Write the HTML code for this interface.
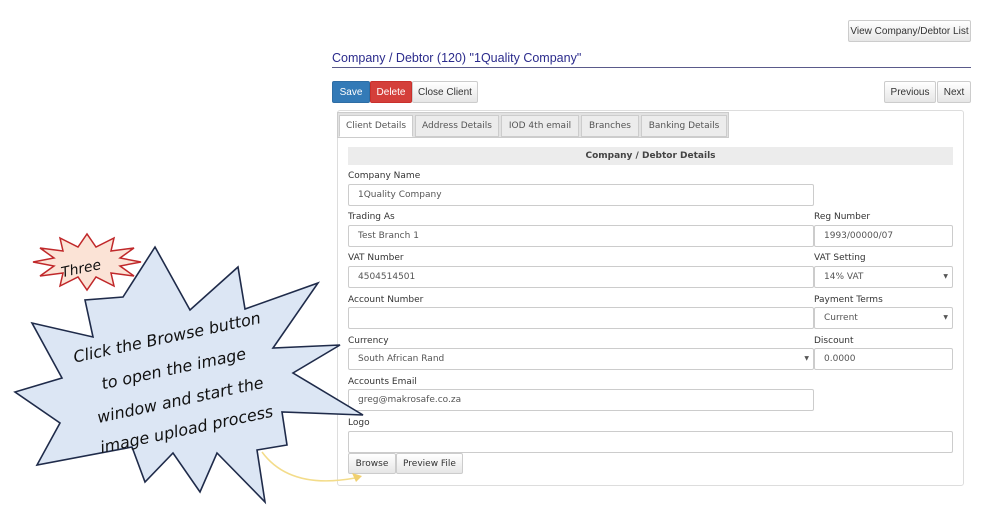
<!DOCTYPE html>
<html><head><meta charset="utf-8"><style>
*{box-sizing:border-box;margin:0;padding:0}
body{width:984px;height:525px;background:#fff;position:relative;overflow:hidden;font-family:"DejaVu Sans",Verdana,sans-serif;font-size:9px;color:#333}
.a{position:absolute}
.btn{position:absolute;border:1px solid #ccc;border-radius:2px;background:linear-gradient(#fff,#e6e6e6);font-family:"Liberation Sans",Arial,sans-serif;font-size:10px;color:#333;display:flex;align-items:center;justify-content:center}
.lbl{position:absolute;font-size:9px;color:#333}
.inp{position:absolute;height:22px;border:1px solid #ccc;border-radius:2px;background:#fff;font-size:9px;color:#555;padding-left:9px;line-height:20px}
.tab{position:absolute;top:115px;height:22px;border:1px solid #ccc;background:#ececec;font-size:9px;color:#555;display:flex;align-items:center;justify-content:center}
.car{position:absolute;right:4px;top:0;font-size:6px;color:#555}
</style></head><body>

<div class="btn" style="left:848px;top:20px;width:123px;height:22px">View Company/Debtor List</div>
<div class="a" style="left:332px;top:51px;font-family:'Liberation Sans',Arial,sans-serif;font-size:12.5px;color:#2b2b8c">Company / Debtor (120) "1Quality Company"</div>
<div class="a" style="left:332px;top:67px;width:639px;height:1px;background:#5a5a8a"></div>

<div class="btn" style="left:332px;top:81px;width:38px;height:22px;background:#337ab7;border-color:#2e6da4;color:#fff">Save</div>
<div class="btn" style="left:370px;top:81px;width:42px;height:22px;background:#d43f3a;border-color:#c9302c;color:#fff">Delete</div>
<div class="btn" style="left:412px;top:81px;width:66px;height:22px">Close Client</div>
<div class="btn" style="left:884px;top:81px;width:52px;height:22px">Previous</div>
<div class="btn" style="left:937px;top:81px;width:34px;height:22px">Next</div>

<div class="a" style="left:337px;top:110px;width:627px;height:376px;border:1px solid #ddd;border-radius:3px"></div>
<div class="a" style="left:337px;top:112px;width:392px;height:26px;background:#e2e2e2;border:1px solid #ccc"></div>
<div class="tab" style="left:339px;width:74px;background:#fff;border-bottom-color:#fff">Client Details</div>
<div class="tab" style="left:415px;width:84px">Address Details</div>
<div class="tab" style="left:501px;width:78px">IOD 4th email</div>
<div class="tab" style="left:581px;width:58px">Branches</div>
<div class="tab" style="left:641px;width:86px">Banking Details</div>

<div class="a" style="left:348px;top:147px;width:605px;height:18px;background:#ececec;font-weight:bold;font-size:9px;color:#444;text-align:center;line-height:18px">Company / Debtor Details</div>

<div class="lbl" style="left:348px;top:171px">Company Name</div>
<div class="inp" style="left:348px;top:184px;width:466px">1Quality Company</div>

<div class="lbl" style="left:348px;top:212px">Trading As</div>
<div class="inp" style="left:348px;top:225px;width:466px">Test Branch 1</div>
<div class="lbl" style="left:814px;top:212px">Reg Number</div>
<div class="inp" style="left:814px;top:225px;width:139px">1993/00000/07</div>

<div class="lbl" style="left:348px;top:253px">VAT Number</div>
<div class="inp" style="left:348px;top:266px;width:466px">4504514501</div>
<div class="lbl" style="left:814px;top:253px">VAT Setting</div>
<div class="inp" style="left:814px;top:266px;width:139px">14% VAT<span class="car">▼</span></div>

<div class="lbl" style="left:348px;top:295px">Account Number</div>
<div class="inp" style="left:348px;top:307px;width:466px"></div>
<div class="lbl" style="left:814px;top:295px">Payment Terms</div>
<div class="inp" style="left:814px;top:307px;width:139px">Current<span class="car">▼</span></div>

<div class="lbl" style="left:348px;top:336px">Currency</div>
<div class="inp" style="left:348px;top:348px;width:466px">South African Rand<span class="car">▼</span></div>
<div class="lbl" style="left:814px;top:336px">Discount</div>
<div class="inp" style="left:814px;top:348px;width:139px">0.0000</div>

<div class="lbl" style="left:348px;top:377px">Accounts Email</div>
<div class="inp" style="left:348px;top:389px;width:466px">greg@makrosafe.co.za</div>

<div class="lbl" style="left:348px;top:418px">Logo</div>
<div class="inp" style="left:348px;top:431px;width:605px"></div>
<div class="btn" style="left:348px;top:453px;width:48px;height:21px;font-family:'DejaVu Sans',sans-serif;font-size:9px">Browse</div>
<div class="btn" style="left:396px;top:453px;width:67px;height:21px;font-family:'DejaVu Sans',sans-serif;font-size:9px">Preview File</div>

<svg class="a" style="left:0;top:0" width="984" height="525">
<path d="M262 452 Q290 490 355 478" fill="none" stroke="#f3dc8a" stroke-width="1.5"/>
<polygon points="352,473 362,476 356,482" fill="#f0d070"/>
<polygon points="141,262 120,266 134,276 111,273 114,286 96,277 87,290 78,277 60,286 63,273 40,276 54,266 33,262 54,258 40,248 63,251 60,238 78,247 87,234 96,247 114,238 111,251 134,248 120,258" fill="#fbe3d6" stroke="#c0282a" stroke-width="1.5"/>
<polygon points="155,247 190,310 238,267 245,309 318,283 273,348 340,345 293,373 363,415 282,412 287,445 257,450 265,502 217,453 200,492 173,453 145,482 132,447 37,465 60,423 15,392 62,378 32,323 93,337 85,300 123,297" fill="#dce6f4" stroke="#1f2b4a" stroke-width="1.6" stroke-linejoin="miter"/>
<g font-family="'DejaVu Sans',sans-serif" font-style="italic" fill="#111" text-anchor="middle">
<text x="82" y="273" font-size="14" transform="rotate(-12 82 273)">Three</text>
<g transform="rotate(-12 175 375)" font-size="16">
<text x="175" y="342">Click the Browse button</text>
<text x="175" y="374">to open the image</text>
<text x="175" y="406">window and start the</text>
<text x="175" y="436">image upload process</text>
</g></g>
</svg>
</body></html>
